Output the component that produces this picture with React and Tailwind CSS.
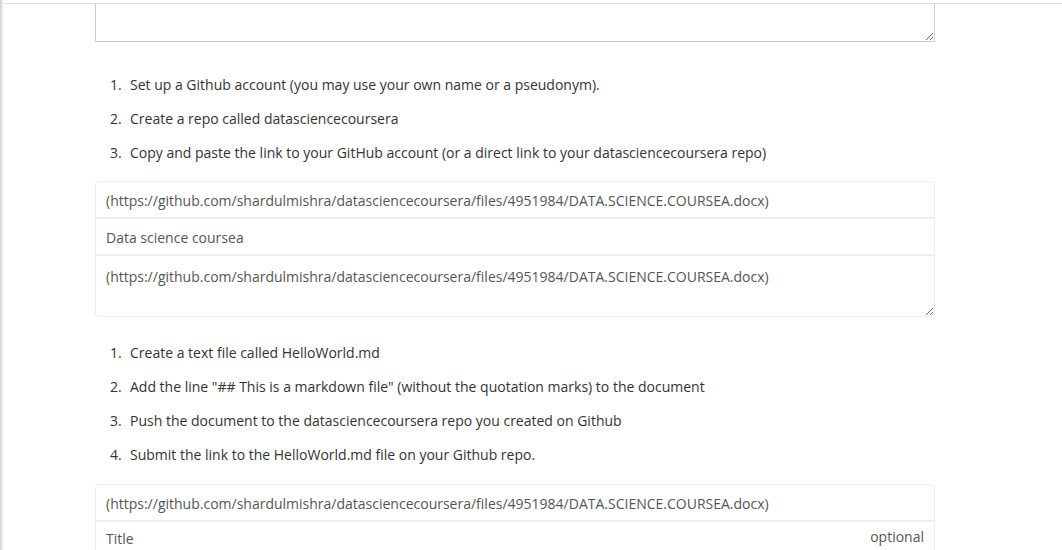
import React from "react";

const LINK =
  "(https://github.com/shardulmishra/datasciencecoursera/files/4951984/DATA.SCIENCE.COURSEA.docx)";

function Steps({ items }) {
  return (
    <ol className="pl-[15px] text-[14px] leading-[20px] text-[#333] flex flex-col gap-[14px]">
      {items.map((t, i) => (
        <li key={t} className="flex">
          <span className="w-[20px] shrink-0">{i + 1}.</span>
          <span>{t}</span>
        </li>
      ))}
    </ol>
  );
}

function Row({ children }) {
  return (
    <div className="h-[37px] flex items-center pt-[2px] px-[10px] text-[14px] text-[#555] border-b-2 border-[#eeeeee]">
      {children}
    </div>
  );
}

export default function App() {
  return (
    <div
      className="flex items-start w-[1062px] h-[550px] overflow-hidden bg-white"
      style={{ fontFamily: '"Open Sans", "Liberation Sans", sans-serif' }}
    >
      <div className="w-[4px] h-[550px] shrink-0 bg-gradient-to-r from-[#cfcfcf] to-white" />
      <div className="flex-1">
        <div className="h-[3px]" />
        <div className="border-t border-[#dddddd]" />
        <div className="ml-[91px] w-[840px]">
          <textarea
            readOnly
            className="block w-full h-[38px] border border-t-0 border-[#cccccc] resize-y outline-none"
          />

          <div className="mt-[33px]">
            <Steps
              items={[
                "Set up a Github account (you may use your own name or a pseudonym).",
                "Create a repo called datasciencecoursera",
                "Copy and paste the link to your GitHub account (or a direct link to your datasciencecoursera repo)",
              ]}
            />
          </div>

          <div className="mt-[18px] border border-[#eeeeee] rounded-[4px]">
            <Row>{LINK}</Row>
            <Row>Data science coursea</Row>
            <textarea
              readOnly
              value={LINK}
              className="block w-full h-[60px] px-[10px] pt-[11px] text-[14px] leading-[20px] text-[#555] resize-y outline-none rounded-b-[4px] bg-transparent"
            />
          </div>

          <div className="mt-[26px]">
            <Steps
              items={[
                "Create a text file called HelloWorld.md",
                'Add the line "## This is a markdown file" (without the quotation marks) to the document',
                "Push the document to the datasciencecoursera repo you created on Github",
                "Submit the link to the HelloWorld.md file on your Github repo.",
              ]}
            />
          </div>

          <div className="mt-[19px] border border-[#eeeeee] rounded-[4px]">
            <Row>{LINK}</Row>
            <div className="h-[37px] flex justify-between px-[10px] text-[14px] leading-[20px] text-[#555]">
              <span className="pt-[7px]">Title</span>
              <span className="pt-[5px]">optional</span>
            </div>
          </div>
        </div>
      </div>
    </div>
  );
}
